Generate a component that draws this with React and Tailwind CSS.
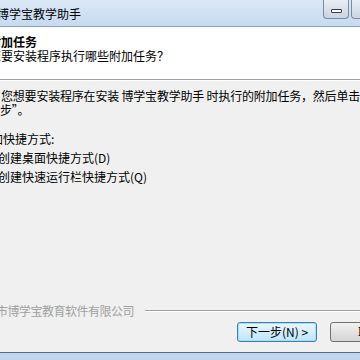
import React from "react";

const font = { fontFamily: '"Noto Sans CJK SC", "Liberation Sans", sans-serif' };

const TitleBar = () => (
  <div className="flex h-[27px] shrink-0 bg-gradient-to-b from-[#dbe8f6] to-[#c6daf1] border-b border-[#8a9fb8]">
    <div className="flex-1 min-w-0 ml-[-3px] pt-[6px] text-[12px] leading-[15px] text-black whitespace-nowrap">
      博学宝教学助手
    </div>
    <div className="flex gap-[2px] w-[37px] shrink-0 items-start">
      <div className="w-[26px] h-[19px] shrink-0 rounded-b-[4px] border border-t-0 border-[#7d8a9a] bg-gradient-to-b from-[#e9eef5] to-[#c9d4e2] flex items-center justify-center">
        <div className="w-[11px] h-[4px] mt-[3px] bg-white border border-[#3b3b3b] rounded-[1px]" />
      </div>
      <div className="w-[26px] h-[19px] shrink-0 rounded-bl-[4px] border border-t-0 border-[#7d8a9a] bg-gradient-to-b from-[#e9eef5] to-[#c9d4e2]" />
    </div>
  </div>
);

const Header = () => (
  <div className="h-[53px] shrink-0 bg-white border-b border-[#a0a0a0] pt-[8px] text-[12px] leading-[14px] text-black whitespace-nowrap">
    <div className="ml-[-11px] font-bold">附加任务</div>
    <div className="ml-[-11px]">您要安装程序执行哪些附加任务？</div>
  </div>
);

const TaskItem = ({ label }) => (
  <div className="flex items-center gap-[4px] ml-[-19px] h-[19px]">
    <div className="w-[13px] h-[13px] border border-[#8f8f8f] bg-white shrink-0" />
    <span>{label}</span>
  </div>
);

export default function App() {
  return (
    <div className="w-[360px] h-[360px] overflow-hidden flex flex-col bg-[#f0f0f0]" style={font}>
      <TitleBar />
      <Header />
      <div className="h-px bg-white shrink-0" />
      <div className="flex-1 flex flex-col text-[12px] text-black whitespace-nowrap">
        <div className="pt-[8px] pl-px leading-[14px] tracking-[-0.2px]">
          <div>您想要安装程序在安装 博学宝教学助手 时执行的附加任务，然后单击“下一</div>
          <div className="ml-[-1px]">步”。</div>
        </div>
        <div className="mt-[12px] flex flex-col leading-[19px]">
          <div className="ml-[-21px] h-[19px]">附加快捷方式:</div>
          <TaskItem label="创建桌面快捷方式(D)" />
          <TaskItem label="创建快速运行栏快捷方式(Q)" />
        </div>
        <div className="flex-1" />
        <div className="flex items-center gap-[11px] ml-[-27px] h-[14px]">
          <span className="text-[#a0a0a0] tracking-[-0.5px]">某某市博学宝教育软件有限公司</span>
          <div className="flex-1 flex flex-col">
            <div className="h-px bg-[#a0a0a0]" />
            <div className="h-px bg-white" />
          </div>
        </div>
        <div className="flex gap-[13px] pl-[237px] mt-[4px] mb-[10px] h-[20px]">
          <div className="w-[80px] h-[20px] shrink-0 rounded-[3px] border border-[#3c7fb1] bg-gradient-to-b from-[#eaf6fd] to-[#bee6fd] shadow-[inset_0_0_0_1px_#a8dcf7] flex items-center justify-center leading-[14px]">
            下一步(N) &gt;
          </div>
          <div className="w-[80px] h-[20px] shrink-0 rounded-[3px] border border-[#707070] bg-gradient-to-b from-[#f2f2f2] to-[#d4d4d4] flex items-center justify-center leading-[14px]">
            取消
          </div>
        </div>
      </div>
      <div className="h-[8px] shrink-0 border-t border-[#5a6a7e] bg-[#c0d6ee]" />
    </div>
  );
}
